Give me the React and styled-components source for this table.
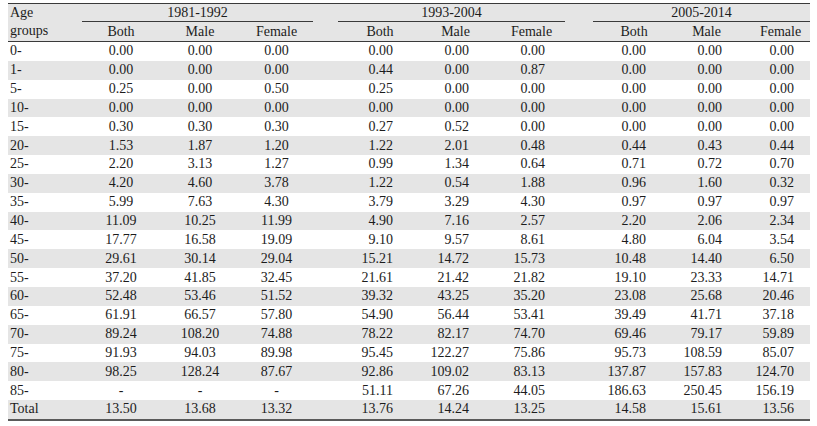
import styled, { createGlobalStyle } from "styled-components";

const GlobalStyle = createGlobalStyle`
  body {
    margin: 0;
    background: #ffffff;
  }
`;

const Page = styled.div`
  padding: 3px 0 0 8px;
`;

const Table = styled.table`
  border-collapse: collapse;
  table-layout: fixed;
  width: 802px;
  font-family: "Liberation Serif", "Times New Roman", serif;
  font-size: 14px;
  color: #1c1c1c;
  border-top: 1px solid #3a3a3a;
  border-bottom: 2px solid #5a5a5a;
`;

const HeadRow = styled.tr`
  background: #e5e5e5;
`;

const SubRow = styled.tr`
  background: #e5e5e5;
  border-bottom: 1px solid #3a3a3a;
`;

const Row = styled.tr`
  background: ${(p) => (p.$shade ? "#e5e5e5" : "#ffffff")};
`;

const AgeCell = styled.td`
  padding: 0 0 0 2px;
  height: ${(p) => p.$h || "18.85px"};
  text-align: left;
  vertical-align: middle;
  white-space: nowrap;
`;

const GroupCell = styled.th`
  font-weight: normal;
  padding: 0;
  height: 17px;
  text-align: center;
  vertical-align: middle;
  border-bottom: 1px solid #3a3a3a;
`;

const HeadCell = styled.th`
  font-weight: normal;
  padding: 0 0 0 ${(p) => p.$shift}px;
  height: 19px;
  text-align: center;
  vertical-align: middle;
`;

const Cell = styled.td`
  padding: 0 ${(p) => p.$pad}px 0 0;
  height: 18.85px;
  text-align: ${(p) => p.$align};
  vertical-align: middle;
  white-space: nowrap;
`;

const Spacer = styled.td`
  padding: 0;
`;

const widths = [74, 78, 80, 73, 25, 75, 76, 76, 28, 69, 76, 72];

const periods = [
  { label: "1981-1992", align: "center", pad: 0, shift: 0 },
  { label: "1993-2004", align: "right", pad: 20, shift: 9 },
  { label: "2005-2014", align: "right", pad: 16, shift: 13 },
];

const rows = [
  ["0-", "0.00 0.00 0.00", "0.00 0.00 0.00", "0.00 0.00 0.00"],
  ["1-", "0.00 0.00 0.00", "0.44 0.00 0.87", "0.00 0.00 0.00"],
  ["5-", "0.25 0.00 0.50", "0.25 0.00 0.00", "0.00 0.00 0.00"],
  ["10-", "0.00 0.00 0.00", "0.00 0.00 0.00", "0.00 0.00 0.00"],
  ["15-", "0.30 0.30 0.30", "0.27 0.52 0.00", "0.00 0.00 0.00"],
  ["20-", "1.53 1.87 1.20", "1.22 2.01 0.48", "0.44 0.43 0.44"],
  ["25-", "2.20 3.13 1.27", "0.99 1.34 0.64", "0.71 0.72 0.70"],
  ["30-", "4.20 4.60 3.78", "1.22 0.54 1.88", "0.96 1.60 0.32"],
  ["35-", "5.99 7.63 4.30", "3.79 3.29 4.30", "0.97 0.97 0.97"],
  ["40-", "11.09 10.25 11.99", "4.90 7.16 2.57", "2.20 2.06 2.34"],
  ["45-", "17.77 16.58 19.09", "9.10 9.57 8.61", "4.80 6.04 3.54"],
  ["50-", "29.61 30.14 29.04", "15.21 14.72 15.73", "10.48 14.40 6.50"],
  ["55-", "37.20 41.85 32.45", "21.61 21.42 21.82", "19.10 23.33 14.71"],
  ["60-", "52.48 53.46 51.52", "39.32 43.25 35.20", "23.08 25.68 20.46"],
  ["65-", "61.91 66.57 57.80", "54.90 56.44 53.41", "39.49 41.71 37.18"],
  ["70-", "89.24 108.20 74.88", "78.22 82.17 74.70", "69.46 79.17 59.89"],
  ["75-", "91.93 94.03 89.98", "95.45 122.27 75.86", "95.73 108.59 85.07"],
  ["80-", "98.25 128.24 87.67", "92.86 109.02 83.13", "137.87 157.83 124.70"],
  ["85-", "- - -", "51.11 67.26 44.05", "186.63 250.45 156.19"],
  ["Total", "13.50 13.68 13.32", "13.76 14.24 13.25", "14.58 15.61 13.56"],
];

const sexes = ["Both", "Male", "Female"];

export default function App() {
  return (
    <Page>
      <GlobalStyle />
      <Table>
        <colgroup>
          {widths.map((w, i) => (
            <col key={i} style={{ width: w }} />
          ))}
        </colgroup>
        <thead>
          <HeadRow>
            <AgeCell $h="17px">Age</AgeCell>
            {periods.map((p, i) => [
              i > 0 && <Spacer key={"s" + i} />,
              <GroupCell key={p.label} colSpan={3}>
                {p.label}
              </GroupCell>,
            ])}
          </HeadRow>
          <SubRow>
            <AgeCell $h="19px">groups</AgeCell>
            {periods.map((p, i) => [
              i > 0 && <Spacer key={"s" + i} />,
              ...sexes.map((s) => (
                <HeadCell key={p.label + s} $shift={p.shift}>
                  {s}
                </HeadCell>
              )),
            ])}
          </SubRow>
        </thead>
        <tbody>
          {rows.map(([age, ...groups], r) => (
            <Row key={age} $shade={r % 2 === 1}>
              <AgeCell>{age}</AgeCell>
              {groups.map((g, i) => [
                i > 0 && <Spacer key={"s" + i} />,
                ...g.split(" ").map((v, j) => (
                  <Cell
                    key={i + "-" + j}
                    $align={periods[i].align}
                    $pad={periods[i].pad}
                  >
                    {v}
                  </Cell>
                )),
              ])}
            </Row>
          ))}
        </tbody>
      </Table>
    </Page>
  );
}
